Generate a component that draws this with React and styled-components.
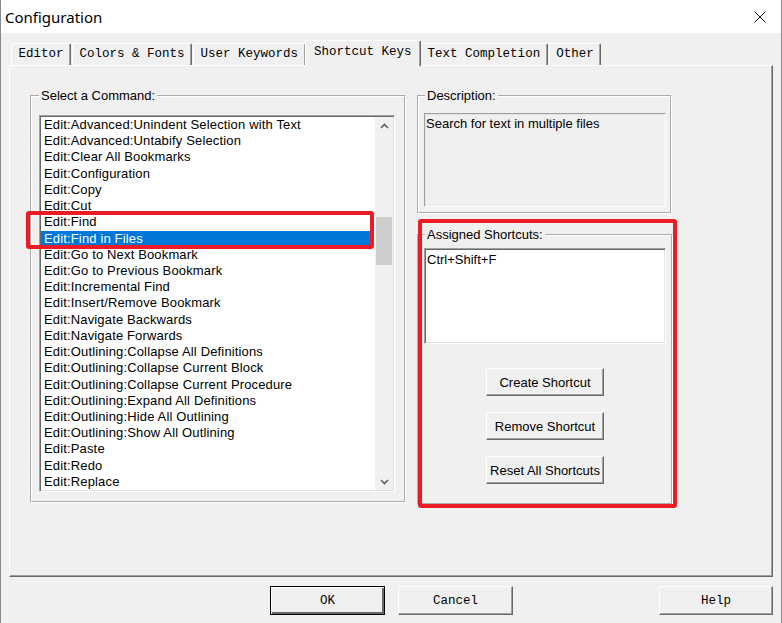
import React from 'react'
import styled, { createGlobalStyle } from 'styled-components'

const GlobalStyle = createGlobalStyle`
    html, body {
        margin: 0;
        padding: 0;
        background: #f0f0f0;
    }
    * {
        box-sizing: border-box;
    }
`

const tabs = ['Editor', 'Colors & Fonts', 'User Keywords', 'Shortcut Keys', 'Text Completion', 'Other']

const commands = [
    'Edit:Advanced:Unindent Selection with Text',
    'Edit:Advanced:Untabify Selection',
    'Edit:Clear All Bookmarks',
    'Edit:Configuration',
    'Edit:Copy',
    'Edit:Cut',
    'Edit:Find',
    'Edit:Find in Files',
    'Edit:Go to Next Bookmark',
    'Edit:Go to Previous Bookmark',
    'Edit:Incremental Find',
    'Edit:Insert/Remove Bookmark',
    'Edit:Navigate Backwards',
    'Edit:Navigate Forwards',
    'Edit:Outlining:Collapse All Definitions',
    'Edit:Outlining:Collapse Current Block',
    'Edit:Outlining:Collapse Current Procedure',
    'Edit:Outlining:Expand All Definitions',
    'Edit:Outlining:Hide All Outlining',
    'Edit:Outlining:Show All Outlining',
    'Edit:Paste',
    'Edit:Redo',
    'Edit:Replace',
]

function Chevron({ up }) {
    return (
        <svg width="9" height="6" viewBox="0 0 9 6">
            <path
                d={up ? 'M1 5 L4.5 1.5 L8 5' : 'M1 1 L4.5 4.5 L8 1'}
                fill="none"
                stroke="#606060"
                strokeWidth="1.6"
            />
        </svg>
    )
}

export default function App() {
    const selected = 7

    return (
        <>
            <GlobalStyle />
            <Window>
                <TitleBar>
                    <Title>Configuration</Title>
                    <svg width="12" height="12" viewBox="0 0 12 12">
                        <path d="M0.5 0.5 L11.5 11.5 M11.5 0.5 L0.5 11.5" stroke="#111" strokeWidth="1" />
                    </svg>
                </TitleBar>

                <Body>
                    <TabRow>
                        {tabs.map((t) => (
                            <Tab key={t} $active={t === 'Shortcut Keys'}>{t}</Tab>
                        ))}
                    </TabRow>

                    <Panel>
                        <Group $width={376} $pad="12px 9px 9px 7px">
                            <Legend>Select a Command:</Legend>
                            <ListBox $height={377}>
                                <Items>
                                    {commands.map((c, i) => (
                                        <Item key={c} $selected={i === selected}>{c}</Item>
                                    ))}
                                </Items>
                                <ScrollBar>
                                    <ArrowButton><Chevron up /></ArrowButton>
                                    <Track>
                                        <Thumb style={{ marginTop: 83 }} />
                                    </Track>
                                    <ArrowButton><Chevron /></ArrowButton>
                                </ScrollBar>
                            </ListBox>
                        </Group>

                        <SideColumn>
                            <Group $width={255} $pad="10px 4px 5px 5px">
                                <Legend $shift={1}>Description:</Legend>
                                <DescriptionBox>Search for text in multiple files</DescriptionBox>
                            </Group>

                            <Group $width={256} $pad="6px 5px 19px 5px">
                                <Legend $shift={1}>Assigned Shortcuts:</Legend>
                                <ShortcutList>Ctrl+Shift+F</ShortcutList>
                                <ButtonStack>
                                    <PushButton>Create Shortcut</PushButton>
                                    <PushButton>Remove Shortcut</PushButton>
                                    <PushButton>Reset All Shortcuts</PushButton>
                                </ButtonStack>
                            </Group>
                        </SideColumn>
                    </Panel>

                    <Footer>
                        <DialogButton $default>OK</DialogButton>
                        <DialogButton>Cancel</DialogButton>
                        <DialogButton $push>Help</DialogButton>
                    </Footer>
                </Body>

                <Highlight $x={25} $y={211} $w={348} $h={38} />
                <Highlight $x={417} $y={219} $w={259} $h={289} />
            </Window>
        </>
    )
}

const Window = styled.div`
    position: relative;
    width: 782px;
    height: 623px;
    background: #f0f0f0;
    border-left: 1px solid #8a8a8a;
    border-right: 1px solid #8a8a8a;
    overflow: hidden;
`

const TitleBar = styled.div`
    height: 33px;
    background: #fff;
    display: flex;
    align-items: center;
    justify-content: space-between;
    padding: 0 15px 0 4px;
`

const Title = styled.span`
    font-family: "Noto Sans", "Liberation Sans", sans-serif;
    font-size: 15px;
    color: #000;
`

const Body = styled.div`
    padding: 7px 8px 0 8px;
`

const TabRow = styled.div`
    display: flex;
    align-items: flex-end;
    gap: 1px;
    height: 25px;
    padding-left: 2px;
`

const Tab = styled.div`
    position: relative;
    z-index: ${(p) => (p.$active ? 2 : 0)};
    height: ${(p) => (p.$active ? 26 : 22)}px;
    margin: ${(p) => (p.$active ? '0 -2px -1px -2px' : '0')};
    padding: ${(p) => (p.$active ? '1px 8.5px 0' : '0 6.5px')};
    background: #f0f0f0;
    border-top: 1px solid #fff;
    border-left: 1px solid #fff;
    border-right: 1px solid #696969;
    border-radius: 2px 2px 0 0;
    box-shadow: inset -1px 0 0 #a0a0a0;
    font-family: "Liberation Mono", monospace;
    font-size: 12.5px;
    line-height: 21px;
    color: #000;
    white-space: pre;
`

const Panel = styled.div`
    display: flex;
    gap: 11px;
    height: 512px;
    padding: 22px 0 0 20px;
    border-top: 1px solid #fff;
    border-left: 1px solid #fff;
    border-right: 1px solid #696969;
    border-bottom: 1px solid #696969;
    box-shadow: inset -1px -1px 0 #a0a0a0;
`

const Group = styled.fieldset`
    margin: 0;
    min-width: 0;
    width: ${(p) => p.$width}px;
    padding: ${(p) => p.$pad};
    border: 2px groove #fff;
    align-self: flex-start;
`

const Legend = styled.legend`
    margin-left: ${(p) => p.$shift || 0}px;
    padding: 0 2px;
    font-family: "Liberation Sans", Arial, sans-serif;
    font-size: 13px;
    line-height: 15px;
    color: #000;
`

const ListBox = styled.div`
    display: flex;
    height: ${(p) => p.$height}px;
    background: #fff;
    border: 1px solid;
    border-color: #a0a0a0 #fff #fff #a0a0a0;
    box-shadow: inset 1px 1px 0 #696969, inset -1px -1px 0 #e3e3e3;
    padding: 1px;
`

const Items = styled.div`
    flex: 1;
    margin-right: 2px;
    overflow: hidden;
`

const Item = styled.div`
    height: 16.23px;
    line-height: 16.23px;
    padding-left: 3px;
    font-family: "Liberation Sans", Arial, sans-serif;
    font-size: 13px;
    letter-spacing: 0.15px;
    white-space: nowrap;
    color: ${(p) => (p.$selected ? '#fff' : '#000')};
    background: ${(p) => (p.$selected ? '#0078d7' : 'transparent')};
`

const ScrollBar = styled.div`
    width: 18px;
    display: flex;
    flex-direction: column;
    background: #f0f0f0;
`

const ArrowButton = styled.div`
    height: 17px;
    display: flex;
    align-items: center;
    justify-content: center;
`

const Track = styled.div`
    flex: 1;
    padding: 0 1px;
`

const Thumb = styled.div`
    height: 48px;
    background: #cdcdcd;
`

const SideColumn = styled.div`
    display: flex;
    flex-direction: column;
    gap: 13px;
`

const DescriptionBox = styled.div`
    height: 94px;
    padding: 2px 1px;
    background: #f0f0f0;
    border: 1px solid;
    border-color: #a0a0a0 #fff #fff #a0a0a0;
    box-shadow: inset 1px 1px 0 #e3e3e3;
    font-family: "Liberation Sans", Arial, sans-serif;
    font-size: 13px;
    line-height: 16px;
    color: #000;
`

const ShortcutList = styled.div`
    height: 96px;
    padding: 3px 2px;
    background: #fff;
    border: 1px solid;
    border-color: #a0a0a0 #fff #fff #a0a0a0;
    box-shadow: inset 1px 1px 0 #696969, inset -1px -1px 0 #e3e3e3;
    font-family: "Liberation Sans", Arial, sans-serif;
    font-size: 13px;
    line-height: 16px;
    color: #000;
`

const ButtonStack = styled.div`
    display: flex;
    flex-direction: column;
    align-items: center;
    gap: 16px;
    margin-top: 24px;
`

const PushButton = styled.button`
    width: 118px;
    height: 28px;
    padding: 0;
    background: #f0f0f0;
    border: 1px solid;
    border-color: #fff #696969 #696969 #fff;
    box-shadow: inset -1px -1px 0 #a0a0a0;
    font-family: "Liberation Sans", Arial, sans-serif;
    font-size: 13px;
    color: #000;
`

const Footer = styled.div`
    display: flex;
    gap: 13px;
    margin-top: 9px;
    padding-left: 261px;
`

const DialogButton = styled.button`
    width: ${(p) => (p.$push ? 114 : 115)}px;
    height: 29px;
    margin-left: ${(p) => (p.$push ? 'auto' : '0')};
    padding: 0;
    background: #f0f0f0;
    border: 1px solid;
    border-color: ${(p) => (p.$default ? '#000' : '#fff #696969 #696969 #fff')};
    box-shadow: ${(p) =>
        p.$default
            ? 'inset 1px 1px 0 #fff, inset -2px -2px 0 #696969, inset -1px -1px 0 #a0a0a0'
            : 'inset -1px -1px 0 #a0a0a0'};
    font-family: "Liberation Mono", monospace;
    font-size: 12.5px;
    color: #000;
`

const Highlight = styled.div`
    position: absolute;
    left: ${(p) => p.$x}px;
    top: ${(p) => p.$y}px;
    width: ${(p) => p.$w}px;
    height: ${(p) => p.$h}px;
    border: 4px solid #ed1c24;
    border-radius: 3px;
    pointer-events: none;
`
